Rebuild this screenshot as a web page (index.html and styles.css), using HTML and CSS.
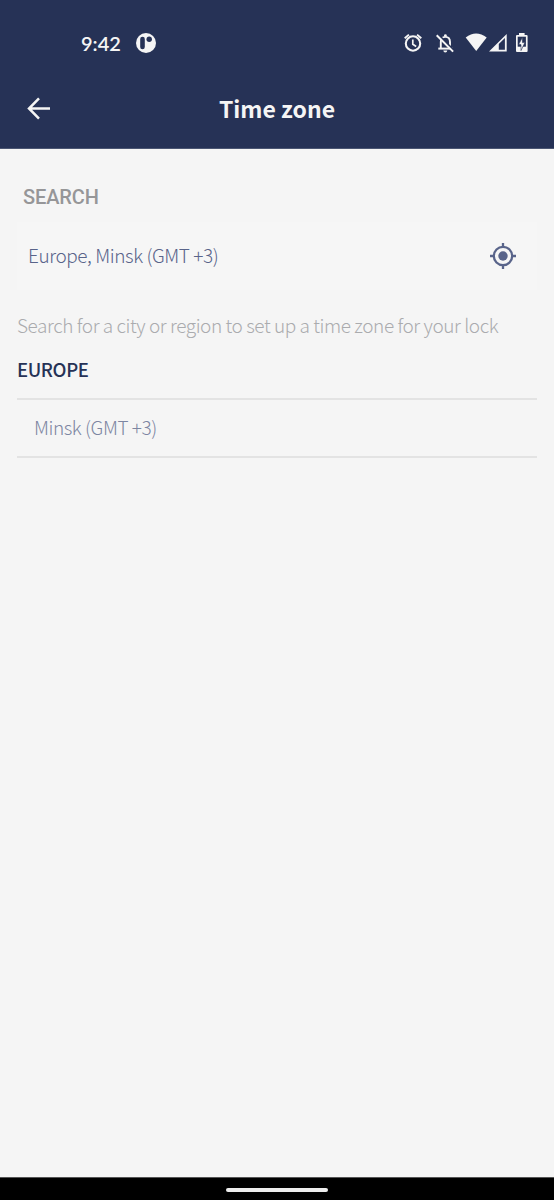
FILE: index.html
```html
<!DOCTYPE html>
<html lang="en">
<head>
<meta charset="utf-8">
<title>Time zone</title>
<link rel="stylesheet" href="styles.css">
</head>
<body>
<div class="screen">
  <header class="header">
    <div class="status">
      <div class="status-left">
        <span class="clock">9:42</span>
        <svg class="app-icon" width="20" height="20" viewBox="0 0 20 20"><circle cx="10" cy="10" r="10" fill="#f5f5f5"/><path d="M6.500 6v8" fill="none" stroke="#263256" stroke-linecap="round" stroke-width="4.600"/><circle cx="13.200" cy="6.300" r="2.700" fill="#263256"/></svg>
      </div>
      <svg class="status-icons" width="128" height="24" viewBox="402 31 128 24" fill="none" stroke="#f5f5f5">
        <circle cx="413" cy="43.500" r="7.200" stroke-width="2.100"/>
        <path d="M412.800 39.400v4.900l3.400 2.200" stroke-width="1.700"/>
        <path d="M404.700 38.200l4.200-3.600M421.300 38.200l-4.200-3.600" stroke-width="1.900"/>
        <path d="M440.800 48.300v-6.200q0-5.200 4.600-5.200t4.600 5.200v6.200" stroke-width="1.900"/>
        <path d="M438.300 48.600h14.200" stroke-width="2"/>
        <path d="M443.300 50.400h4q-.2 2-2 2t-2-2zM444 36.800v-1.200q0-1.400 1.400-1.400t1.400 1.400v1.200z" fill="#f5f5f5" stroke="none"/>
        <path d="M438.200 34.400l16.300 16.500" stroke="#263256" stroke-width="1.800"/>
        <path d="M436.700 35.300l16.400 16.300" stroke-width="2"/>
        <path d="M465.700 37.600q10.400-8.200 21 0L476.200 51z" fill="#f5f5f5" stroke="none"/>
        <path d="M489 51.500L506.700 34v17.500zM498.800 44v5.700h6.100V38z" fill="#f5f5f5" fill-rule="evenodd" stroke="none"/>
        <path d="M519 35v-2h5.600v2h2q1 0 1 1v15q0 1-1 1h-9.600q-1 0-1-1V36q0-1 1-1z" fill="#f5f5f5" stroke="none"/>
        <path d="M517.700 36.700h8.200v10h-8.200z" fill="#263256" stroke="none"/>
        <path d="M522.500 37.300v5.300h2.400l-3.900 8v-6h-2.400z" fill="#f5f5f5" stroke="#263256" stroke-width=".6"/>
      </svg>
    </div>
    <div class="toolbar">
      <svg class="back" width="24" height="24" viewBox="0 0 24 24" fill="none" stroke="#f5f5f5" stroke-width="2.500"><path d="M12 1.300L2 11.500 12 21.700M2 11.500h21"/></svg>
      <h1 class="title">Time zone</h1>
    </div>
  </header>
  <main class="content">
    <h2 class="search-label">SEARCH</h2>
    <div class="field">
      <span class="value">Europe, Minsk (GMT +3)</span>
      <svg class="locate" width="26" height="26" viewBox="0 0 26 26"><circle cx="13" cy="13" r="4.700" fill="#59648a"/><circle cx="13" cy="13" r="9.200" fill="none" stroke="#59648a" stroke-width="2.300"/><path d="M13 0v4M13 22v4M0 13h4M22 13h4" stroke="#59648a" stroke-width="2.300"/></svg>
    </div>
    <p class="hint">Search for a city or region to set up a time zone for your lock</p>
    <h2 class="region">EUROPE</h2>
    <div class="zone">Minsk (GMT +3)</div>
  </main>
  <footer class="navbar"><div class="handle"></div></footer>
</div>
</body>
</html>
```
FILE: styles.css
```css
* { box-sizing: border-box; }
body { margin: 0; font-family: "Noto Sans CJK SC", "Noto Sans", sans-serif; }
h1, h2, p { margin: 0; }
svg { display: block; flex: none; }
.screen { width: 554px; height: 1200px; display: flex; flex-direction: column; background: #f5f5f5; }
.header { height: 149px; background: #263256; border-bottom: 1px solid #4b5673; color: #f5f5f5; }
.status { display: flex; justify-content: space-between; padding: 31px 24px 0 81px; height: 71px; }
.status-left { display: flex; align-items: center; height: 24px; gap: 15px; }
.clock { width: 40px; font: 600 20px/24px Lato, sans-serif; white-space: nowrap; }
.toolbar { display: grid; grid-template-columns: 50px 1fr 50px; align-items: center; height: 76px; }
.back { margin-left: 27px; }
.title { margin-top: -2px; font-size: 23px; line-height: 32px; font-weight: 700; text-align: center; white-space: nowrap; }
.content { flex: 1; padding: 34px 17px 0; white-space: nowrap; }
.search-label { padding-left: 6px; font: 500 20px/28px Roboto, sans-serif; letter-spacing: -.1px; color: #969698; }
.field { height: 68px; margin-top: 11px; padding: 0 21px 0 11px; display: flex; align-items: center; justify-content: space-between; background: #f6f6f6; }
.value { padding-bottom: 4px; font-size: 19px; font-weight: 300; letter-spacing: -.43px; color: #59648a; }
.hint { margin-top: 20px; font-size: 19px; line-height: 30px; font-weight: 300; letter-spacing: -.43px; color: #aaabae; }
.region { margin-top: 14px; font-size: 18.500px; line-height: 30px; font-weight: 500; letter-spacing: -.4px; color: #263256; }
.zone { margin-top: 14px; height: 60px; padding-left: 17px; border: solid #e3e3e3; border-width: 2px 0; font-size: 19px; line-height: 54px; font-weight: 300; letter-spacing: -.45px; color: #7d86a2; }
.navbar { height: 23px; background: #000; border-top: 1px solid #555; display: flex; justify-content: center; padding-top: 10px; }
.handle { width: 102px; height: 4px; border-radius: 2px; background: #eee; }
```
